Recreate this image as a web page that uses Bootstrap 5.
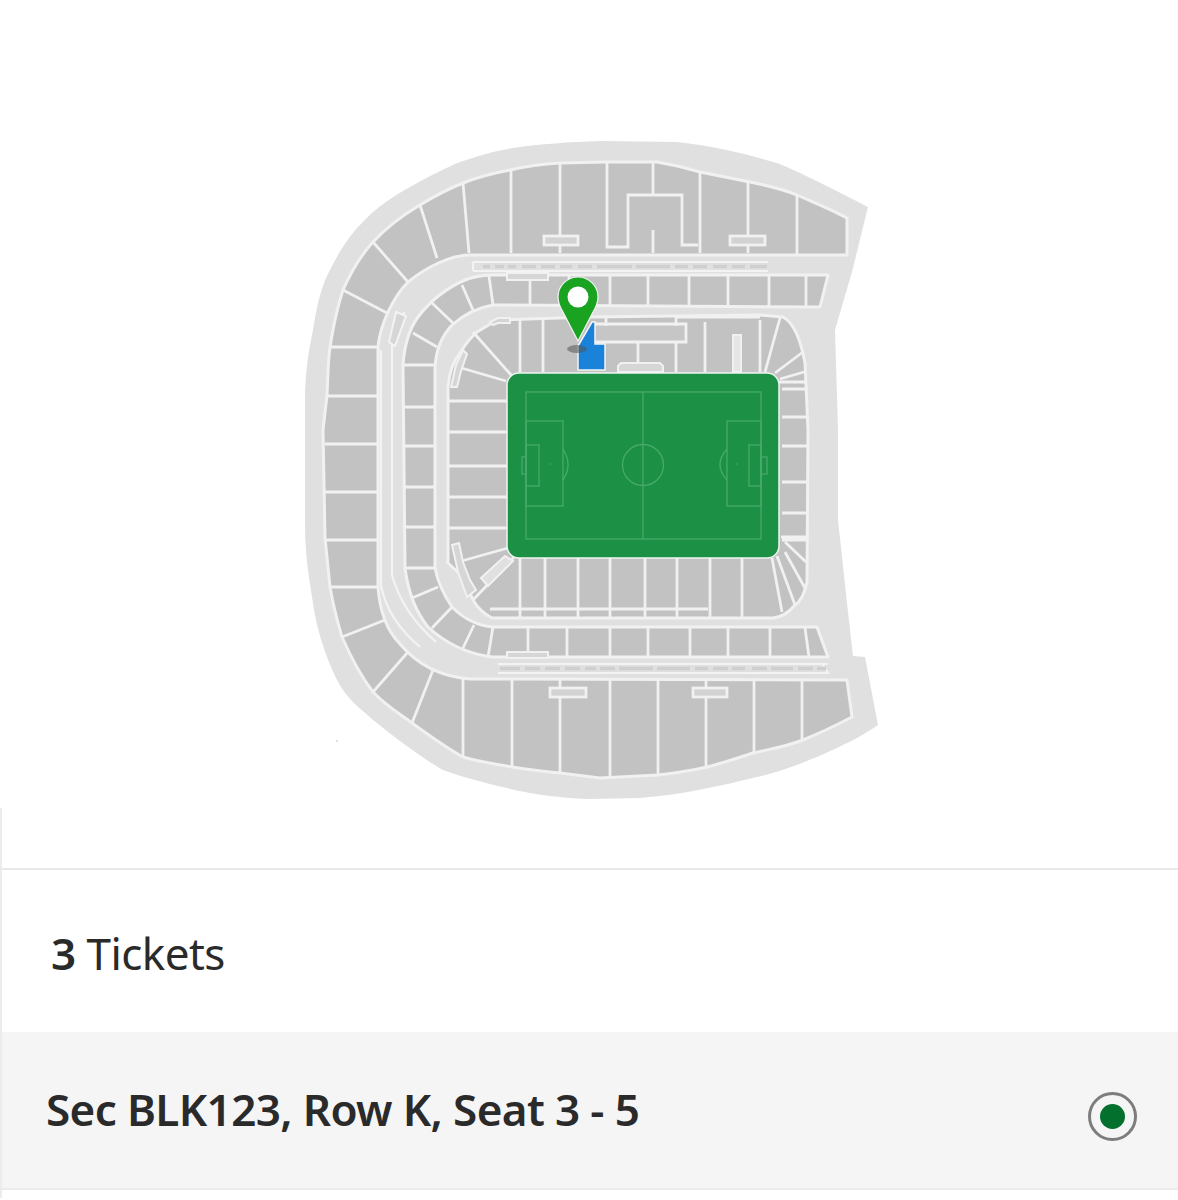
<!DOCTYPE html>
<html lang="en">
<head>
<meta charset="utf-8">
<title>Tickets</title>
<link href="https://cdn.jsdelivr.net/npm/bootstrap@5.3.0/dist/css/bootstrap.min.css" rel="stylesheet">
<style>
html,body{background:#fff;margin:0;height:1200px;overflow:hidden}
.sheet{width:1178px;height:1200px;font-family:"Noto Sans","Open Sans",sans-serif;color:#2a2a2a}
.map-wrap{height:808px}
.map-wrap svg{display:block;filter:blur(.55px)}
.map-gap{height:60px;border-left:2px solid #ececec}
.qty-row{height:164px;border-top:2px solid #e8e8e8;border-left:2px solid #ececec;padding-left:49px;font-size:44px;letter-spacing:-.55px;padding-top:3px}
.qty-row b{font-weight:600}
.seat-row{height:158px;background:#f5f5f5;border-bottom:2px solid #ebebeb;border-left:2px solid #ececec;padding-left:44px;padding-right:41px;font-size:44px;font-weight:600;letter-spacing:-.62px}
.seat-text{margin-top:-3px}
.seat-radio{width:49px;height:49px;border:3px solid #7d7d7d;border-radius:50%;margin-top:13px}
.seat-dot{width:25px;height:25px;border-radius:50%;background:#04702d}
.rest{height:8px;border-left:2px solid #ececec}
</style>
</head>
<body>
<main class="sheet">
<div class="map-wrap">
<svg width="1178" height="808" viewBox="0 0 1178 808" role="img" aria-label="Stadium seating map">
  <!-- concourse -->
  <path fill="#e0e0e0" d="M600 141 L677 142 C715 146 750 155 777 163 C800 172 835 190 868 207 L852 272 L835 330 L838 430 L838 520 L847 603 L853 656 L865 657 L878 725 C850 745 790 770 757 777 C720 786 680 795 640 798 L590 799 C555 798 520 792 507 788 C490 784 465 778 443 770 C425 760 395 738 373 720 C360 708 352 703 343 690 C334 677 318 640 313 603 C308 570 305 555 305 520 L305 397 C306 365 309 350 313 330 C318 300 322 285 330 270 C340 250 350 235 360 225 C375 208 392 197 410 187 C430 176 445 168 460 162 C480 155 495 151 513 148 C540 144 570 142 600 141 Z"/>

  <!-- upper tier -->
  <path fill="#c2c2c2" stroke="#f1f1f1" stroke-width="3" stroke-linejoin="round" d="M607 162 L657 162 C675 165 690 169 700 172 L750 182 C770 186 785 190 797 195 C815 203 832 210 847 218 L847 255 L470 255 C450 255 425 268 408 282 C393 297 380 325 378 347 L378 587 C380 615 388 632 400 644 C420 668 445 677 470 679 L847 680 L852 717 C835 726 815 735 803 740 C785 747 770 749 753 753 C735 759 720 764 707 767 C690 771 675 773 658 775 L600 778 L560 773 C540 771 525 769 512 767 C495 764 480 762 463 757 C445 747 430 736 412 723 C400 714 385 705 373 692 C360 675 350 655 342 637 C337 620 333 605 330 587 L325 538 L323 430 L327 395 C328 375 328 360 330 347 C333 328 337 308 343 290 C351 272 361 255 373 242 C387 227 403 215 420 205 C433 197 448 189 463 183 C478 177 494 173 510 170 C527 166 543 164 560 163 Z"/>
  <path fill="none" stroke="#f1f1f1" stroke-width="2.800" d="M330 347H378M327 396H378M325 444H378M325 492H378M325 540H378M330 587H378
    M342 637L385 620M373 692L408 652M412 723L433 670M463 679V757M512 680V767M560 680V773M610 680V778M658 680V775M706 680V767M754 680V753M802 680V740
    M343 290L387 313M373 242L408 282M420 205L437 258M463 183L469 253M511 170V253M560 163V253M607 162V247H628V195H682V245H698M653 162V195M653 230V253M700 172V253M748 182V253M797 195V255"/>
  <g fill="#d2d2d2" stroke="#f1f1f1" stroke-width="2.800">
    <rect x="544" y="236" width="34" height="9"/>
    <rect x="730" y="236" width="35" height="9"/>
    <rect x="550" y="688" width="36" height="9"/>
    <rect x="693" y="688" width="34" height="9"/>
  </g>

  <!-- walkway strips with dashes -->
  <path fill="none" stroke="#f3f3f3" stroke-width="2.200" d="M473 262H768M473 271H768M473 262V271M498 664H828M498 673H828L822 664
    M381 350V586M392 330V575M381 586Q388 620 420 647M392 575Q402 612 436 642M392 330Q398 318 405 312"/>
  <path fill="none" stroke="#cfcfcf" stroke-width="3.500" d="M483 266.500H490M495 266.500H504M508 266.500H516M522 266.500H536M541 266.500H555M560 266.500H572M578 266.500H592M597 266.500H632M636 266.500H670M675 266.500H688M693 266.500H707M713 266.500H727M732 266.500H745M750 266.500H767
    M500 668.500H520M525 668.500H540M545 668.500H560M565 668.500H580M585 668.500H596M600 668.500H615M619 668.500H653M657 668.500H690M695 668.500H708M713 668.500H728M732 668.500H745M752 668.500H767M771 668.500H793M798 668.500H813M817 668.500H826"/>
  <path fill="#d6d6d6" stroke="#f3f3f3" stroke-width="2" d="M396 312L406 316L395 346L389 342Z"/>

  <!-- middle tier -->
  <path fill="#c2c2c2" stroke="#f1f1f1" stroke-width="3" stroke-linejoin="round" d="M828 275 L820 307 L493 305 Q470 309 452 325 Q436 342 435 368 L435 568 Q439 588 452 607 Q470 625 493 627 L817 627 L828 657 L492 657 Q455 652 428 627 Q410 605 405 568 L403 365 Q405 335 418 317 Q437 292 465 280 Q478 275 495 275 Z"/>
  <path fill="none" stroke="#f1f1f1" stroke-width="2.800" d="M403 365H435M403 407H435M403 446H435M403 487H435M403 527H435M405 568H435
    M413 333L437 347M432 303L453 323M462 285L473 310M489 276L493 305M530 275V305M569 275V305M610 275V306M648 275V306M689 275V306M728 275V306M769 275V306M806 275V307
    M412 598L438 587M432 628L452 607M463 648L474 625M488 657L493 627M528 627V657M567 627V657M610 627V657M648 627V657M690 627V657M728 627V657M770 627V657M805 628L809 657"/>
  <rect x="507" y="273" width="41" height="7" fill="#d6d6d6" stroke="#f1f1f1" stroke-width="2"/>
  <rect x="507" y="652" width="41" height="6" fill="#d6d6d6" stroke="#f1f1f1" stroke-width="2"/>

  <!-- inner tier -->
  <path fill="#c2c2c2" stroke="#f1f1f1" stroke-width="3" stroke-linejoin="round" d="M497 320 L590 317 L760 315 L783 317 Q798 325 805 363 L808 430 L807 582 Q803 600 795 605 Q785 617 773 618 L492 618 Q480 612 473 600 L463 577 L448 563 L448 387 Q450 365 460 353 Q468 340 477 332 Z"/>
  <path fill="none" stroke="#f1f1f1" stroke-width="2.800" d="M448 401H510M448 432H510M448 466H510M448 497H510M448 528H510
    M473 332L512 376M458 367L506 381M458 562L508 548M473 600L515 556M520 320V372M543 320V372
    M520 558V618M545 558V618M578 558V618M610 558V618M645 558V618M677 558V618M710 558V618M742 558V618M490 609H708
    M772 558L782 612M777 556L795 605M785 552L806 590M781 537H808M785 542L806 562
    M782 389H808M782 417H808M782 446H808M782 482H808M782 513H808M782 540H808
    M780 318L765 372M803 352L775 373M804 372L780 379M770 382H806
    M676 342V372M705 322V372M760 320V372"/>
  <path fill="#e6e6e6" stroke="#f1f1f1" stroke-width="2" d="M733 335H741V372H733Z"/>
  <path fill="#c6c6c6" stroke="#f1f1f1" stroke-width="2.800" d="M593 324H686V342H593Z"/>
  <path fill="none" stroke="#f1f1f1" stroke-width="2.800" d="M606 317V326M676 317H760M676 317V326M638 342V363"/>
  <path fill="#d6d6d6" stroke="#f1f1f1" stroke-width="2" d="M618 372V366L621 363H660L663 366V372Z"/>
  <path fill="#d4d4d4" stroke="#f1f1f1" stroke-width="2" d="M490 322L498 318H510L510 323H498L493 325Z"/>
  <path fill="#d6d6d6" stroke="#f1f1f1" stroke-width="2" d="M451 387H457L461 371L467 354L463 350L456 365Z"/>
  <path fill="#d6d6d6" stroke="#f1f1f1" stroke-width="2" d="M452 545L459 543L463 562L470 580L476 590L467 597L458 572Z"/>
  <path fill="#e0e0e0" stroke="#f1f1f1" stroke-width="2" d="M481 578L505 556L513 561L488 586Z"/>

  <!-- selected section -->
  <path fill="#1a82d8" stroke="#f4f4f4" stroke-width="1.500" d="M578 370V346L592 322H595V344H605V370Z"/>

  <!-- pitch -->
  <rect x="507" y="373" width="272" height="185" rx="12" fill="#1c9145" stroke="#eef6f0" stroke-width="1.500"/>
  <g fill="none" stroke="#48aa6a" stroke-width="1.300">
    <rect x="526" y="392" width="235" height="147"/>
    <path d="M643 392V539"/>
    <circle cx="643" cy="465" r="20.500"/>
    <rect x="526" y="421" width="37" height="85"/>
    <rect x="526" y="445" width="13" height="41"/>
    <rect x="522" y="457" width="4" height="17"/>
    <path d="M563 449Q573 465 563 480"/>
    <rect x="727" y="421" width="34" height="85"/>
    <rect x="749" y="445" width="12" height="41"/>
    <rect x="761" y="457" width="6" height="17"/>
    <path d="M727 449Q713 465 727 480"/>
  </g>
  <circle cx="550" cy="464" r=".8" fill="#48aa6a"/>
  <circle cx="737" cy="464" r=".8" fill="#48aa6a"/>

  <!-- pin -->
  <ellipse cx="577" cy="349" rx="10" ry="4" fill="#555" opacity=".55"/>
  <path fill="#19a320" stroke="#f4f4f4" stroke-width="1.200" d="M578 341 L563 312 Q558 304 558 297 A20 20 0 0 1 598 297 Q598 304 593 312 Z"/>
  <circle cx="578" cy="297" r="10.500" fill="#fff"/>
  <circle cx="337" cy="741" r="1" fill="#d8d8d8"/>
</svg>
</div>
<div class="map-gap"></div>
<div class="qty-row d-flex align-items-center"><span><b>3</b> Tickets</span></div>
<div class="seat-row d-flex align-items-center justify-content-between">
  <span class="seat-text">Sec BLK123, Row K, Seat 3 - 5</span>
  <span class="seat-radio d-flex align-items-center justify-content-center"><span class="seat-dot"></span></span>
</div>
<div class="rest"></div>
</main>
<script src="https://cdn.jsdelivr.net/npm/bootstrap@5.3.0/dist/js/bootstrap.bundle.min.js"></script>
</body>
</html>
